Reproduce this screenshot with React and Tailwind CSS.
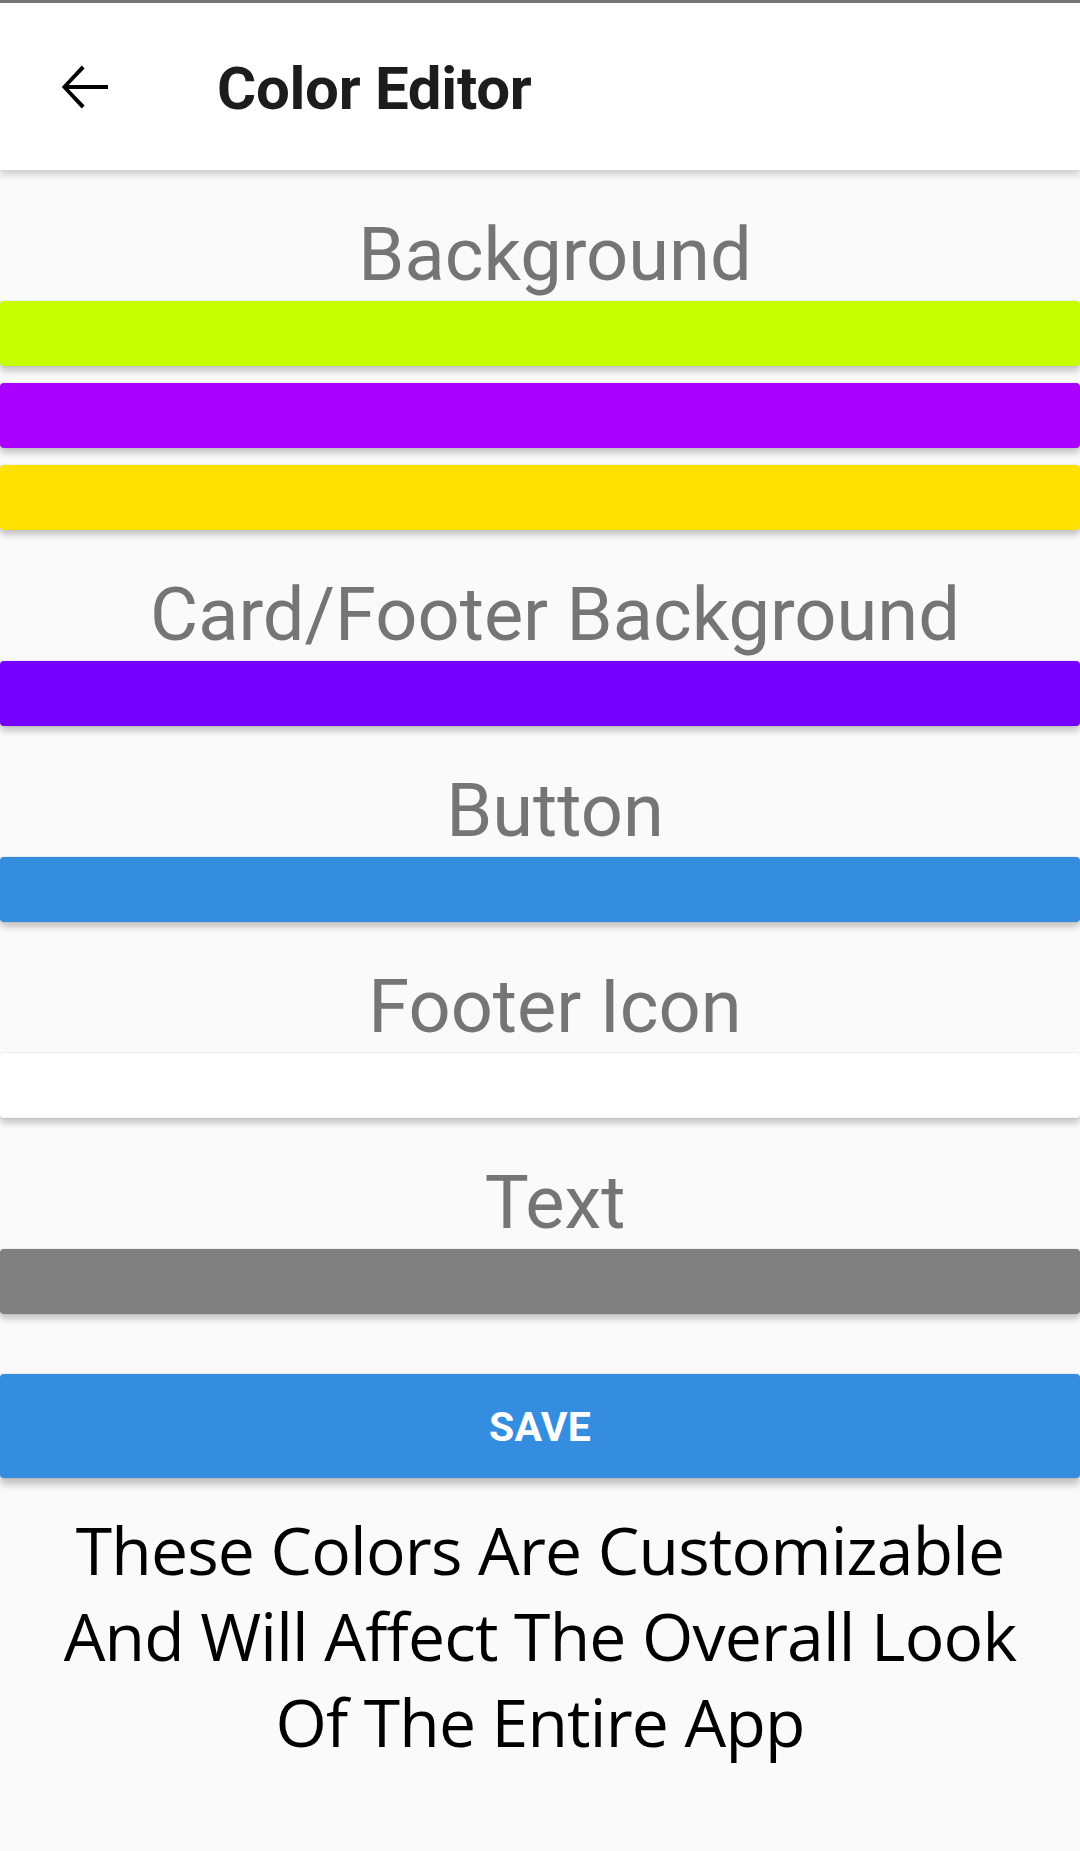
import React from 'react';

const groups = [
  { label: 'Background', colors: ['bg-[#c6ff00]', 'bg-[#aa00ff]', 'bg-[#ffe100]'] },
  { label: 'Card/Footer Background', colors: ['bg-[#7600ff]'] },
  { label: 'Button', colors: ['bg-[#348ddf]'] },
  { label: 'Footer Icon', colors: ['bg-white'] },
  { label: 'Text', colors: ['bg-[#808080]'] },
];

function Swatch({ color }) {
  return (
    <div
      className={`h-[65px] w-full rounded-[4px] shadow-[0_0_2px_rgba(0,0,0,0.14),0_5px_7px_rgba(0,0,0,0.22)] ${color}`}
    />
  );
}

export default function App() {
  return (
    <div className="min-h-[1851px] bg-[#fafafa] font-['Roboto',sans-serif]">
      <div className="h-[3px] bg-[#777777]" />
      {/* App bar */}
      <div className="relative z-10 flex h-[167px] items-center bg-white shadow-[0_4px_8px_rgba(0,0,0,0.2)]">
        <button className="ml-[48px] flex h-[72px] w-[72px] items-center justify-center text-black">
          <svg width="72" height="72" viewBox="0 0 24 24" fill="currentColor">
            <path d="M20 11.3H6.9l5.3-5.5-.95-.95L4.6 12l6.65 7.15.95-.95-5.3-5.5H20z" />
          </svg>
        </button>
        <h1 className="ml-[97px] mt-[4px] text-[60px] font-bold leading-none tracking-[-0.3px] text-[#1c1c1c]">
          Color Editor
        </h1>
      </div>

      <div className="flex flex-col">
        {groups.map((g) => (
          <div key={g.label} className="mt-[41px] flex flex-col">
            <div className="h-[90px] pl-[30px] text-center text-[74px] leading-[87px] text-[#757575]">{g.label}</div>
            <div className="flex flex-col gap-[17px]">
              {g.colors.map((c) => (
                <Swatch key={c} color={c} />
              ))}
            </div>
          </div>
        ))}
      </div>

      <button className="mt-[60px] flex h-[104px] w-full items-center justify-center rounded-[4px] bg-[#348ddf] pt-[4px] text-[41px] font-bold tracking-[0.3px] text-white shadow-[0_0_2px_rgba(0,0,0,0.14),0_6px_8px_rgba(0,0,0,0.25)]">
        SAVE
      </button>

      <p className="mt-[28px] text-center font-['Open_Sans',sans-serif] text-[66px] leading-[86px] tracking-[-0.8px] text-black">
        These Colors Are Customizable
        <br />
        And Will Affect The Overall Look
        <br />
        Of The Entire App
      </p>
    </div>
  );
}
